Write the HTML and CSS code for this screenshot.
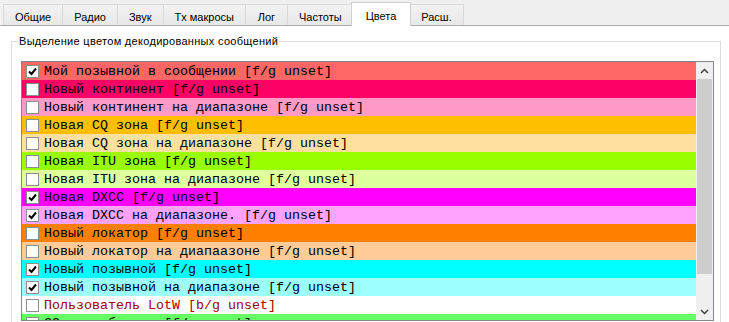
FILE: index.html
```html
<!DOCTYPE html>
<html lang="ru">
<head>
    <meta charset="UTF-8">
    <title>Настройки - Цвета</title>
    <link rel="stylesheet" href="styles.css">
</head>
<body>
    <div class="tabs">
        <div class="tab">Общие</div>
        <div class="tab">Радио</div>
        <div class="tab">Звук</div>
        <div class="tab">Tx макросы</div>
        <div class="tab">Лог</div>
        <div class="tab">Частоты</div>
        <div class="tab active">Цвета</div>
        <div class="tab">Расш.</div>
    </div>

    <div class="page">
        <fieldset class="group">
            <legend>Выделение цветом декодированных сообщений</legend>

            <div class="list">
                <div class="rows">
                    <div class="row c1"><span class="check on"></span>Мой позывной в сообщении [f/g unset]</div>
                    <div class="row c2"><span class="check"></span>Новый континент [f/g unset]</div>
                    <div class="row c3"><span class="check"></span>Новый континент на диапазоне [f/g unset]</div>
                    <div class="row c4"><span class="check"></span>Новая CQ зона [f/g unset]</div>
                    <div class="row c5"><span class="check"></span>Новая CQ зона на диапазоне [f/g unset]</div>
                    <div class="row c6"><span class="check"></span>Новая ITU зона [f/g unset]</div>
                    <div class="row c7"><span class="check"></span>Новая ITU зона на диапазоне [f/g unset]</div>
                    <div class="row c8"><span class="check on"></span>Новая DXCC [f/g unset]</div>
                    <div class="row c9"><span class="check on"></span>Новая DXCC на диапазоне. [f/g unset]</div>
                    <div class="row c10"><span class="check"></span>Новый локатор [f/g unset]</div>
                    <div class="row c11"><span class="check"></span>Новый локатор на диапаазоне [f/g unset]</div>
                    <div class="row c12"><span class="check on"></span>Новый позывной [f/g unset]</div>
                    <div class="row c13"><span class="check on"></span>Новый позывной на диапазоне [f/g unset]</div>
                    <div class="row c14"><span class="check"></span>Пользователь LotW [b/g unset]</div>
                    <div class="row c15"><span class="check"></span>CQ в сообщении [f/g unset]</div>
                </div>

                <div class="scrollbar">
                    <div class="arrow">
                        <svg width="9" height="6" viewBox="0 0 9 6"><path d="M1 5 L4.5 1.5 L8 5" fill="none" stroke="#404040" stroke-width="1.5"/></svg>
                    </div>
                    <div class="track">
                        <div class="thumb"></div>
                    </div>
                    <div class="arrow">
                        <svg width="9" height="6" viewBox="0 0 9 6"><path d="M1 1 L4.5 4.5 L8 1" fill="none" stroke="#404040" stroke-width="1.5"/></svg>
                    </div>
                </div>
            </div>
        </fieldset>
    </div>
</body>
</html>
```

FILE: styles.css
```css
html, body {
    margin: 0;
    padding: 0;
}

body {
    width: 729px;
    height: 322px;
    overflow: hidden;
    background: #fff;
    font-family: "Liberation Sans", Arial, sans-serif;
    font-size: 11px;
    color: #000;
}

.tabs {
    display: flex;
    align-items: flex-end;
    height: 25px;
    padding-left: 3px;
    background: #f0f0f0;
    border-bottom: 1px solid #acacac;
    box-sizing: content-box;
}

.tab {
    height: 21px;
    min-width: 43px;
    box-sizing: border-box;
    line-height: 24px;
    padding: 0 11px;
    text-align: center;
    border: 1px solid #d9d9d9;
    border-bottom: none;
    margin-right: -1px;
    background: linear-gradient(#f2f2f2, #e8e8e8);
    color: #000;
    overflow: hidden;
}

.tab.active {
    height: 24px;
    line-height: 26px;
    margin: 0 -2px -1px -2px;
    padding: 0 14px;
    background: #fff;
    border-color: #cfcfcf;
    position: relative;
    z-index: 1;
}

.page {
    padding: 9px 8px 0 11px;
}

.group {
    margin: 0;
    padding: 14px 6px 0 9px;
    border: 1px solid #dcdcdc;
    border-bottom: none;
    height: 300px;
}

.group legend {
    padding: 0 1px;
    margin-left: -3px;
    letter-spacing: 0.3px;
    color: #000;
}

.list {
    display: flex;
    border: 1px solid #828790;
    height: 258px;
    overflow: hidden;
}

.rows {
    flex: 1;
}

.row {
    display: flex;
    align-items: center;
    height: 18px;
    padding-left: 4px;
    font-family: "Liberation Mono", "Courier New", monospace;
    font-size: 13.33px;
    white-space: nowrap;
    color: #000;
}

.check {
    width: 11px;
    height: 11px;
    margin-right: 5px;
    border: 1px solid #8e8f8f;
    background: #fff;
    flex-shrink: 0;
}

.check.on {
    background: #fff url("data:image/svg+xml,%3Csvg xmlns='http://www.w3.org/2000/svg' width='11' height='11'%3E%3Cpath d='M2 5.5 L4.5 8 L9 2.5' fill='none' stroke='%23000' stroke-width='2'/%3E%3C/svg%3E") no-repeat center;
}

.c1 { background: #ff6666; }
.c2 { background: #ff0066; }
.c3 { background: #ff99c6; }
.c4 { background: #ffbf00; }
.c5 { background: #ffe0a0; }
.c6 { background: #99ff00; }
.c7 { background: #deff9e; }
.c8 { background: #ff00ff; }
.c9 { background: #ffa3ff; }
.c10 { background: #ff8000; }
.c11 { background: #ffcb99; }
.c12 { background: #00ffff; }
.c13 { background: #9effff; }
.c14 { background: #ffffff; color: #a00000; }
.c15 { background: #66ff66; }

.scrollbar {
    width: 17px;
    display: flex;
    flex-direction: column;
    background: #f0f0f0;
}

.arrow {
    height: 17px;
    display: flex;
    align-items: center;
    justify-content: center;
    flex-shrink: 0;
}

.track {
    flex: 1;
    padding: 0 1px;
}

.thumb {
    height: 195px;
    background: #cdcdcd;
}
```
